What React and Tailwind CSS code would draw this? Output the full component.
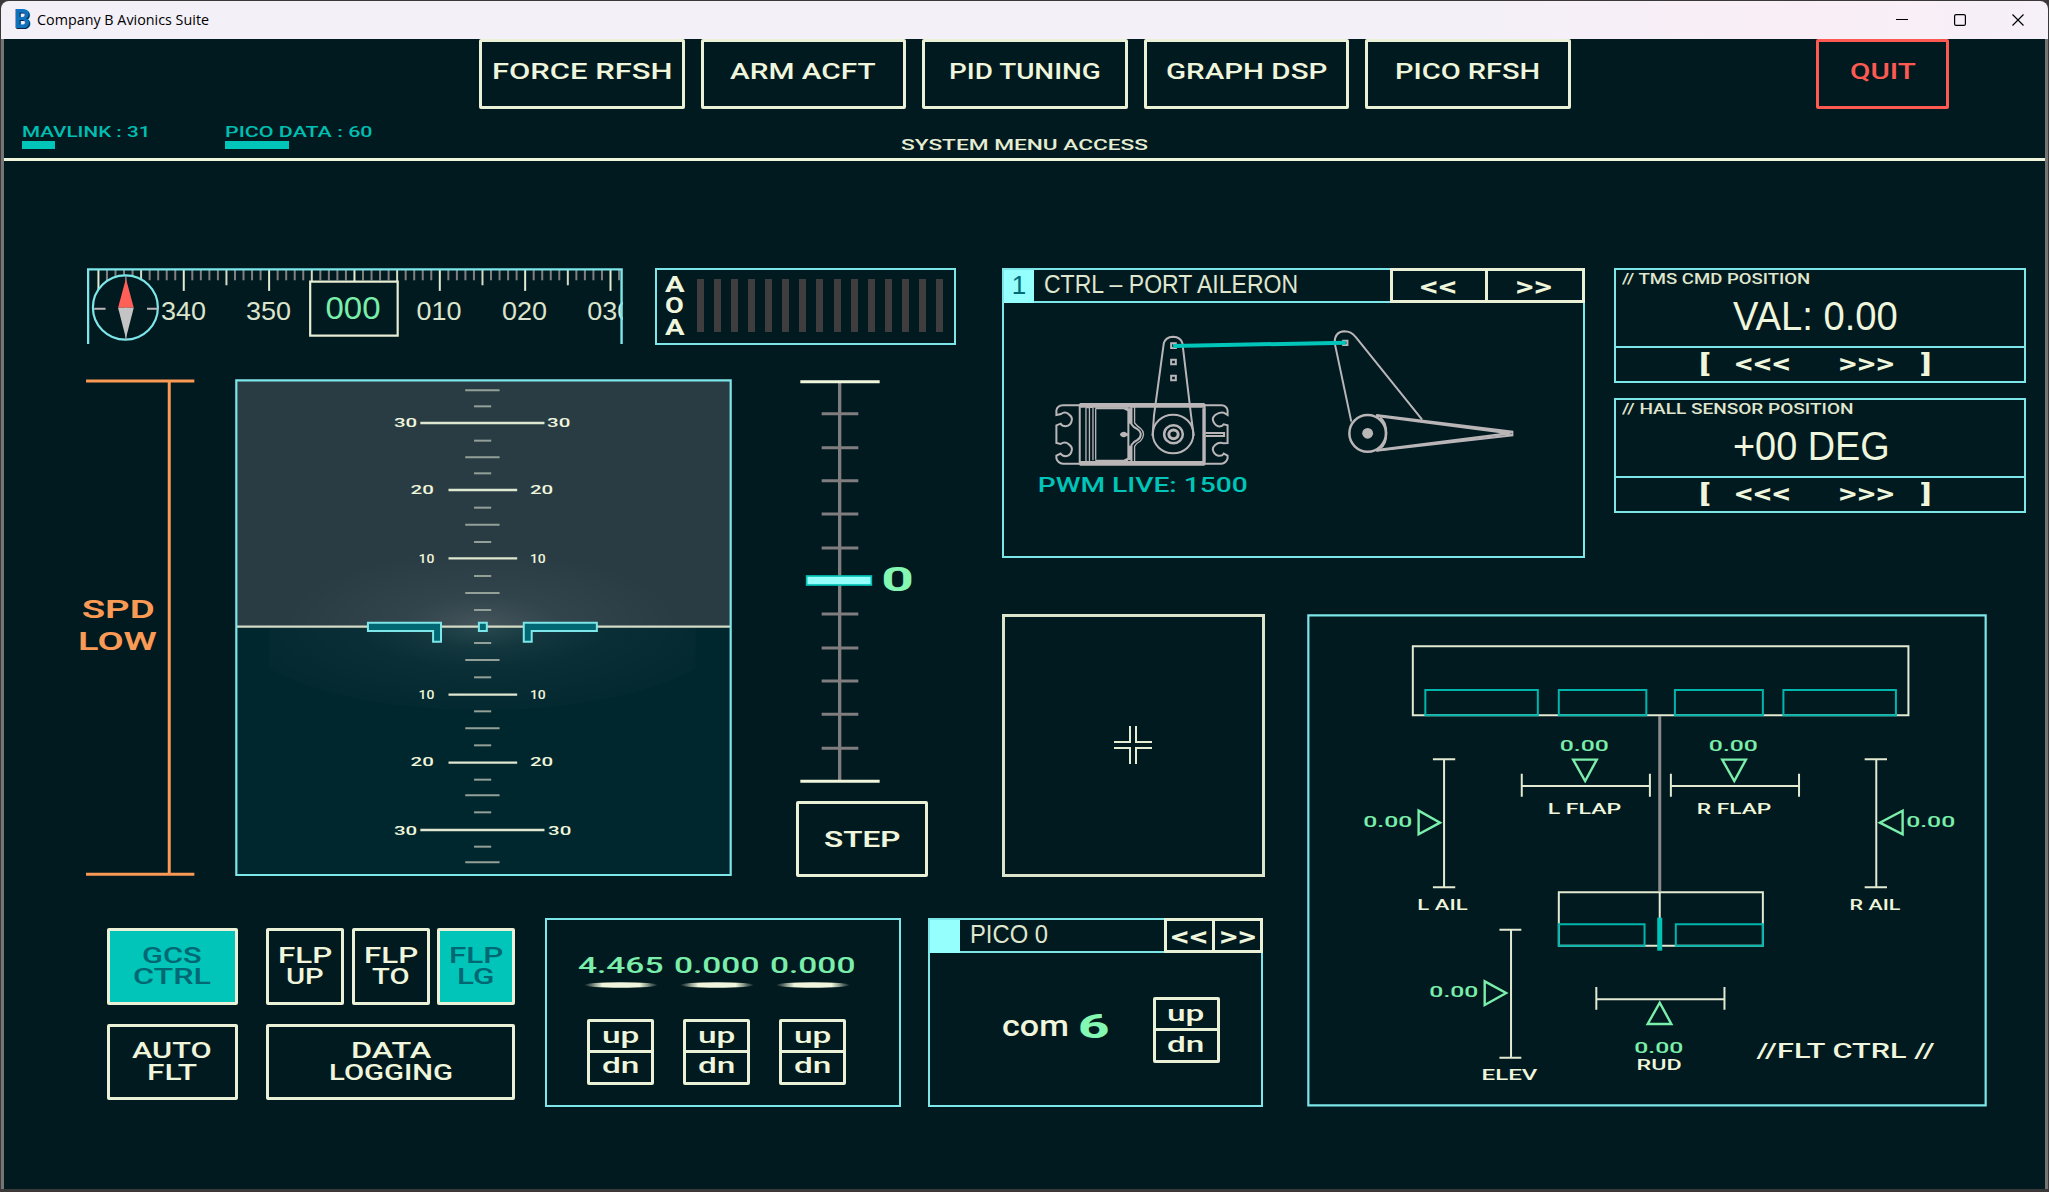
import React, { useLayoutEffect, useRef, useState } from "react";

// Extended display lettering: stretches its text to the width of the box.
function Fit({ className = "", children }) {
  const box = useRef(null);
  const text = useRef(null);
  const [scale, setScale] = useState(1);
  useLayoutEffect(() => {
    setScale(box.current.clientWidth / text.current.offsetWidth);
  }, [children]);
  return (
    <div ref={box} className={`shrink-0 overflow-visible text-left whitespace-nowrap leading-none ${className}`}>
      <span ref={text} className="inline-block origin-left leading-none" style={{ transform: `scaleX(${scale})` }}>
        {children}
      </span>
    </div>
  );
}

const cream = "#f0f6dc";
const dimCream = "#d3dbc6";
const cyan = "#7de6e8";
const teal = "#00c5b8";
const green = "#7aeeaa";
const grey = "#bab6b8";

function Btn({ className = "", children }) {
  return (
    <button className={`flex shrink-0 flex-col items-center justify-center rounded-[2px] border-[3px] border-[#eaf1d7] ${className}`}>
      {children}
    </button>
  );
}

function SvgText({ x, y, w, size = 44, fill = cream, weight = 500, family = "Roboto, sans-serif", children }) {
  return (
    <text x={x} y={y} textLength={w} lengthAdjust="spacingAndGlyphs" fontSize={size} fontWeight={weight} fontFamily={family} fill={fill}>
      {children}
    </text>
  );
}

function Line({ x1, y1, x2, y2, c = cream, s = 2 }) {
  return <line x1={x1} y1={y1} x2={x2} y2={y2} stroke={c} strokeWidth={s} vectorEffect="non-scaling-stroke" />;
}

function TitleBar() {
  return (
    <div className="mx-px flex h-[38px] shrink-0 items-center rounded-t-lg bg-linear-to-r from-[#f3f0f8] from-70% via-[#faeef6] via-88% to-[#f6f0f8] pl-[13px] text-black">
      <span className="-mt-px w-[16px] font-[Roboto] text-[25px] leading-none font-black text-[#0f72be] [text-shadow:1px_1px_0_#0a2440]">B</span>
      <Fit className="-mt-[2px] ml-[7px] w-[172px] font-['Open_Sans'] text-[15px]">Company B Avionics Suite</Fit>
      <div className="mr-[24px] ml-auto flex items-center gap-[46px]">
        <svg className="h-3 w-3" viewBox="0 0 12 12"><path d="M0 5.5H12" stroke="#000" /></svg>
        <svg className="h-3 w-3" viewBox="0 0 12 12"><rect x=".6" y=".6" width="10.8" height="10.8" rx="1.5" fill="none" stroke="#000" strokeWidth="1.2" /></svg>
        <svg className="h-3 w-3" viewBox="0 0 12 12"><path d="M.5 .5L11.5 11.5M11.5 .5L.5 11.5" stroke="#000" strokeWidth="1.2" /></svg>
      </div>
    </div>
  );
}

function Header() {
  return (
    <header className="flex h-[122px] shrink-0 flex-col border-b-[3px] border-[#eff6dc] font-[Roboto] font-medium">
      <div className="flex h-[70px] gap-[16px] pr-[96px] pl-[475px] text-[22px]">
        <Btn className="h-[70px] w-[205.5px] pb-[4px]"><Fit className="w-[180px]">FORCE RFSH</Fit></Btn>
        <Btn className="h-[70px] w-[205.5px] pb-[4px]"><Fit className="w-[146px]">ARM ACFT</Fit></Btn>
        <Btn className="h-[70px] w-[205.5px] pb-[4px]"><Fit className="w-[152px]">PID TUNING</Fit></Btn>
        <Btn className="h-[70px] w-[205.5px] pb-[4px]"><Fit className="w-[161px]">GRAPH DSP</Fit></Btn>
        <Btn className="h-[70px] w-[205.5px] pb-[4px]"><Fit className="w-[145px]">PICO RFSH</Fit></Btn>
        <Btn className="ml-auto h-[70px] w-[133px] border-[#ff5a52]! pb-[4px] text-[#ff5a52]"><Fit className="w-[66px]">QUIT</Fit></Btn>
      </div>
      <div className="flex pl-[18px] text-[15.5px] text-[#00bfb2]">
        <div className="w-[202.5px] pt-[16px]">
          <Fit className="w-[128px]">MAVLINK : 31</Fit>
          <div className="h-[8px] w-[33px] bg-[#00c5b8]" />
        </div>
        <div className="w-[676.5px] pt-[16px]">
          <Fit className="w-[148px]">PICO DATA : 60</Fit>
          <div className="h-[8px] w-[64px] bg-[#00c5b8]" />
        </div>
        <div className="pt-[29px] text-[#e6edd3]"><Fit className="w-[247px]">SYSTEM MENU ACCESS</Fit></div>
      </div>
    </header>
  );
}

function Compass() {
  const ticks = [];
  for (let i = 0; i <= 61; i++) {
    const x = 80 + i * 23.9;
    if (x > 1545) break;
    const major = i % 10 === 0;
    const mid = i % 5 === 0;
    ticks.push(<Line key={i} x1={x} x2={x} y1={56} y2={major ? 122 : mid ? 105 : 90} c={major ? "#e3ead2" : mid ? dimCream : "#817f80"} />);
  }
  const nums = [[258, "340"], [496, "350"], [974, "010"], [1213, "020"], [1452, "030"]];
  return (
    <svg className="h-[76px] w-[536px] shrink-0" viewBox="48 53 1501 229" preserveAspectRatio="none">
      {ticks}
      {nums.map(([x, t]) => (
        <SvgText key={t} x={x - 3} y={210} w={126} size={80} weight={400} fill="#dde4cd" family="'Liberation Sans', sans-serif">{t}</SvgText>
      ))}
      <ellipse cx="155.500" cy="172" rx="91" ry="97" fill="#001a20" stroke={cyan} strokeWidth="2.200" vectorEffect="non-scaling-stroke" />
      <path d="M68 176H100M216 176H246" stroke={grey} strokeWidth="2" vectorEffect="non-scaling-stroke" />
      <path d="M157 78V270" stroke={grey} strokeWidth="1" vectorEffect="non-scaling-stroke" />
      <path d="M157 85L179 173H135Z" fill="#ff5f57" />
      <path d="M157 265L179 173H135Z" fill="#c4c4c4" />
      <rect x="673" y="94" width="245" height="163" fill="#001a20" stroke="#e6edd3" strokeWidth="2.200" vectorEffect="non-scaling-stroke" />
      <SvgText x={716} y={208} w={154} size={94} weight={400} fill={green} family="'Liberation Sans', sans-serif">000</SvgText>
      <path d="M51 282V57H1545V282" fill="none" stroke={cyan} strokeWidth="2.400" vectorEffect="non-scaling-stroke" />
    </svg>
  );
}

function Aoa() {
  return (
    <div className="ml-[32px] flex h-[77px] w-[301px] shrink-0 border-[2px] border-[#7de6e8] pl-[8px] font-[Roboto]">
      <div className="flex flex-col pt-[4px] text-[21.5px] font-bold text-[#f0f6dc]">
        {["A", "O", "A"].map((c, i) => (
          <div key={i} className="flex h-[21.3px] items-center"><Fit className="w-[19px]">{c}</Fit></div>
        ))}
      </div>
      <div className="ml-[13px] flex gap-[10.07px] pt-[9px]">
        {Array.from({ length: 15 }, (_, i) => <div key={i} className="h-[53px] w-[7px] bg-[#3f3d3d]" />)}
      </div>
    </div>
  );
}

function SpeedGauge() {
  return (
    <svg className="h-[498px] w-[116px] shrink-0" viewBox="43 41 263.500 1494" preserveAspectRatio="none">
      <Line x1={59} x2={305} y1={47} y2={47} c="#fb9a55" s={3} />
      <Line x1={59} x2={305} y1={1527} y2={1527} c="#fb9a55" s={3} />
      <Line x1={248} x2={248} y1={47} y2={1527} c="#fb9a55" s={3} />
      <SvgText x={49} y={758} w={166} size={76} weight={600} fill="#fb9a55">SPD</SvgText>
      <SvgText x={41} y={854} w={179} size={76} weight={600} fill="#fb9a55">LOW</SvgText>
    </svg>
  );
}

function Attitude() {
  const short = [123, 226, 324, 427, 530, 632, 734, 833, 936, 1038, 1140, 1243, 1341, 1444];
  const mid = [75, 276, 478, 683, 884, 1089, 1290, 1491];
  const marks = [
    [760, 1108, 184, "30", 53], [798, 1069, 385, "20", 53], [816, 1069, 593, "10", 36],
    [816, 1069, 1001, "10", 36], [798, 1069, 1203, "20", 53], [760, 1110, 1408, "30", 53],
  ];
  return (
    <svg className="ml-[39.5px] h-[498px] w-[497px] shrink-0" viewBox="399 41 1129 1494" preserveAspectRatio="none">
      <defs>
        <radialGradient id="glow">
          <stop offset="0" stopColor="#fff" stopOpacity=".16" />
          <stop offset=".25" stopColor="#fff" stopOpacity=".08" />
          <stop offset=".5" stopColor="#fff" stopOpacity=".04" />
          <stop offset="1" stopColor="#fff" stopOpacity=".012" />
        </radialGradient>
        <radialGradient id="skyGlow">
          <stop offset="0" stopColor="#fff" stopOpacity=".13" />
          <stop offset=".4" stopColor="#fff" stopOpacity=".04" />
          <stop offset="1" stopColor="#fff" stopOpacity="0" />
        </radialGradient>
        <clipPath id="glowClip"><rect x="477" y="784" width="968" height="300" /></clipPath>
        <clipPath id="skyClip"><rect x="402" y="500" width="1123" height="284" /></clipPath>
      </defs>
      <rect x="402" y="45" width="1123" height="739" fill="#293c44" />
      <rect x="402" y="784" width="1123" height="745" fill="#00262e" />
      <ellipse cx="961" cy="784" rx="560" ry="250" fill="url(#glow)" clipPath="url(#glowClip)" />
      <ellipse cx="961" cy="784" rx="450" ry="230" fill="url(#skyGlow)" clipPath="url(#skyClip)" />
      {short.map((y) => <Line key={y} x1={942} x2={981} y1={y} y2={y} c="#93a097" />)}
      {mid.map((y) => <Line key={y} x1={922} x2={1000} y1={y} y2={y} c="#93a097" />)}
      {[374, 579, 988, 1192].map((y) => <Line key={y} x1={884} x2={1040} y1={y} y2={y} c="#e0e7d0" s={2.4} />)}
      {[173, 1394].map((y) => <Line key={y} x1={820} x2={1102} y1={y} y2={y} c="#e0e7d0" s={2.4} />)}
      {marks.map(([a, b, y, t, w]) => (
        <g key={y}>
          <SvgText x={a} y={y} w={w} size={37}>{t}</SvgText>
          <SvgText x={b} y={y} w={w} size={37}>{t}</SvgText>
        </g>
      ))}
      <Line x1={402} x2={1525} y1={784} y2={784} c={dimCream} s={2.2} />
      <g fill="#006773" stroke={cyan} strokeWidth="2">
        <path vectorEffect="non-scaling-stroke" d="M701 772H867V829H849V797H701Z" />
        <path vectorEffect="non-scaling-stroke" d="M1055 772H1221V797H1073V829H1055Z" />
        <path vectorEffect="non-scaling-stroke" d="M953 772H971V797H953Z" />
      </g>
      <rect x="402" y="45" width="1123" height="1484" fill="none" stroke={cyan} strokeWidth="2.200" vectorEffect="non-scaling-stroke" />
    </svg>
  );
}

function Trim() {
  return (
    <svg className="h-[404px] w-[132px] shrink-0" viewBox="48 42 396 1212">
      <path d="M179 50V1249" stroke="#807d7e" strokeWidth="10" />
      <path d="M125 146H235M125 248H235M125 347H235M125 447H235M125 549H235M125 747H235M125 849H235M125 948H235M125 1048H235M125 1150H235" stroke="#807d7e" strokeWidth="9" />
      <path d="M61 50H299M61 1249H299" stroke={cream} strokeWidth="9" />
      <rect x="80" y="633" width="194" height="27" fill="#94fffb" stroke={teal} strokeWidth="5" />
      <SvgText x={304} y={678} w={98} size={97} weight={700} fill="#84f7b2">0</SvgText>
    </svg>
  );
}

function Servo() {
  return (
    <svg className="h-[252px] w-[577px] shrink-0" viewBox="38.500 144 1483 756" preserveAspectRatio="none">
      <g fill="none" stroke={grey} strokeWidth="2">
        <g>
          {[
            "M228 451H185Q170 452 168 466V480L180 477Q190 468 200 478Q208 484 208 493Q206 512 192 514Q182 514 179 506L168 511V564L179 567Q190 558 200 568Q208 574 208 583Q206 602 192 604Q182 602 179 596L168 602V610Q172 625 185 626H228",
            "M550 451H592Q606 452 608 466V480L598 473Q588 470 576 480Q570 486 570 493Q572 508 584 514Q594 516 598 508L608 511V564L598 565Q586 560 576 570Q570 576 570 583Q572 598 584 602Q594 604 598 596L608 602V610Q604 625 592 626H550",
            "M228 447V629M549 447V629M228 447H549M228 629H549",
            "M268 460H352M268 617H352M342 460L352 466M342 617L352 611",
            "M353 460V615M361 455V508Q366 518 376 522Q384 528 385 538Q384 550 376 555Q366 560 361 570V622",
            "M551 534H599V543H551",
            "M415 543L419 480L444 265Q448 246 468 245Q488 246 492 265L514 480L521 543",
            "M883 262Q884 230 908 229Q926 229 937 246L1108 494",
            "M883 262L926 500",
            "M990 480L1340 530V541L990 587M1340 530L1308 535L1340 541",
            "M1000 488Q1016 500 1016 535Q1016 570 1000 580",
          ].map((d) => <path key={d} d={d} vectorEffect="non-scaling-stroke" />)}
          <path d="M244 458V618M253 456V620M262 458V616M269 462V614M244 458Q250 456 262 456M244 618Q250 622 262 622" strokeWidth="1.300" vectorEffect="non-scaling-stroke" />
          <path d="M369 455V504Q376 514 384 520Q392 528 392 538Q391 550 384 558Q374 564 369 574V622" strokeWidth="1.300" vectorEffect="non-scaling-stroke" />
        </g>
        <path d="M228 452H549M228 624H549" strokeWidth="4" vectorEffect="non-scaling-stroke" />
        <path d="M547 460V618M357 460V506M357 572V616" strokeWidth="3" vectorEffect="non-scaling-stroke" />
        <path d="M990 482L1335 535L990 586" strokeWidth="2.600" vectorEffect="non-scaling-stroke" />
        <ellipse cx="468" cy="537" rx="52" ry="58" vectorEffect="non-scaling-stroke" />
        <ellipse cx="469" cy="538" rx="24" ry="27" strokeWidth="2.500" vectorEffect="non-scaling-stroke" />
        <ellipse cx="469" cy="538" rx="12" ry="13" strokeWidth="3" vectorEffect="non-scaling-stroke" />
        <ellipse cx="968" cy="535" rx="47" ry="55" strokeWidth="2.500" vectorEffect="non-scaling-stroke" />
        {[272, 321, 369].map((y) => <rect key={y} x="463" y={y - 7} width="12" height="14" vectorEffect="non-scaling-stroke" />)}
        <rect x="905" y="257" width="11" height="13" vectorEffect="non-scaling-stroke" />
      </g>
      <ellipse cx="968" cy="535" rx="14" ry="16" fill={grey} />
      <path d="M331 538Q334 529 343 530L353 536V541L343 547Q334 548 331 538Z" fill={grey} />
      <path d="M468 273L912 263" stroke={teal} strokeWidth="4" vectorEffect="non-scaling-stroke" />
      <SvgText x={120} y={710} w={540} size={62} fill={teal}>PWM LIVE: 1500</SvgText>
    </svg>
  );
}

function PanelHead({ chip, title, nav }) {
  return (
    <div className="flex h-[33px] shrink-0 border-b-[2px] border-[#7de6e8]">
      <div className="-mb-[2px] flex w-[30px] shrink-0 items-center justify-center bg-[#94fffc] pb-[3px] font-['Liberation_Sans'] text-[26px] leading-none text-[#006a78]">{chip}</div>
      {title}
      {nav}
    </div>
  );
}

function ControlPanel() {
  return (
    <div className="col-start-2 row-start-1 mt-[107px] flex h-[290px] w-[583px] flex-col border-[2px] border-[#7de6e8]">
      <PanelHead
        chip="1"
        title={<Fit className="mt-[2px] ml-[10px] w-[254px] font-['Liberation_Sans'] text-[25px] text-[#e0e7cf]">CTRL – PORT AILERON</Fit>}
        nav={
          <div className="-mt-[2px] -mr-[2px] ml-auto flex h-[35px] w-[195px] border-[3px] border-[#eaf1d7] font-[Roboto] text-[27px] font-medium text-[#f0f6dc]">
            <div className="flex flex-1 items-center justify-center border-r-[3px] border-[#eaf1d7] pt-[3px]"><Fit className="w-[37px]">&lt;&lt;</Fit></div>
            <div className="flex flex-1 items-center justify-center pt-[3px] pr-[3px]"><Fit className="w-[37px]">&gt;&gt;</Fit></div>
          </div>
        }
      />
      <div className="pl-[2px]"><Servo /></div>
    </div>
  );
}

function ValuePanel({ label, value }) {
  return (
    <div className="flex h-[115px] w-[412px] flex-col border-[2px] border-[#7de6e8] text-[#f0f6dc]">
      <div className="flex h-[78px] flex-col border-b-[2px] border-[#7de6e8]">
        <div className="pt-[2px] pl-[6px] font-[Roboto] text-[14px] font-medium text-[#e0e7cf]">{label}</div>
        <div className="pt-[10px] pl-[117px] font-['Liberation_Sans'] text-[40px]">{value}</div>
      </div>
      <div className="flex h-[32px] items-center pl-[83px] font-[Roboto] text-[27px] font-medium">
        <Fit className="w-[10px] text-[23px] font-bold">[</Fit>
        <Fit className="ml-[26px] w-[56px]">&lt;&lt;&lt;</Fit>
        <Fit className="ml-[47px] w-[56px]">&gt;&gt;&gt;</Fit>
        <Fit className="ml-[27px] w-[10px] text-[23px] font-bold">]</Fit>
      </div>
    </div>
  );
}

function XYPad() {
  return (
    <div className="col-start-2 row-start-2 flex h-[263px] w-[263px] items-center justify-center border-[3px] border-[#dde4cc] pr-[2px] pb-[2px]">
      <svg className="h-[38px] w-[38px]" viewBox="-19 -19 38 38" fill="none" stroke="#e6edd3" strokeWidth="2">
        <path d="M-3 -19V-3H-19M3 -19V-3H19M-3 19V3H-19M3 19V3H19" />
      </svg>
    </div>
  );
}

function FlightControls() {
  return (
    <div className="col-start-3 row-start-2 row-span-2 ml-[1px] flex h-[494px] w-[680px]">
      <svg className="h-[494px] w-[680px]" viewBox="15 28 1523 1482" preserveAspectRatio="none">
        <g fill="none" strokeWidth="2">
          <rect x="18" y="32" width="1517" height="1470" stroke={cyan} strokeWidth="2.200" vectorEffect="non-scaling-stroke" />
          <rect x="252" y="125" width="1110" height="207" stroke="#e3ead1" vectorEffect="non-scaling-stroke" />
          <path d="M280 332V256H532V332ZM579 332V256H775V332ZM839 332V256H1036V332ZM1082 332V256H1334V332Z" stroke="#00b5ab" vectorEffect="non-scaling-stroke" />
          <path d="M805 334V860" stroke="#8d8a8b" strokeWidth="3" vectorEffect="non-scaling-stroke" />
          <path d="M579 1023V863H1036V1023ZM805 863V940" stroke="#e3ead1" vectorEffect="non-scaling-stroke" />
          <path d="M579 1023V959H771V1023ZM841 1023V959H1036V1023Z" stroke="#00b5ab" vectorEffect="non-scaling-stroke" />
          <path d="M805 939V1038" stroke={teal} strokeWidth="5" vectorEffect="non-scaling-stroke" />
          <path d="M496 507V576M783 507V576M496 544H783M830 507V576M1117 507V576M830 544H1117M663 1147V1215M950 1147V1215M663 1184H950M297 464H347M322 464V848M297 848H347M1264 464H1314M1290 464V848M1264 848H1314M446 975H495M472 975V1359M446 1359H495" stroke="#e3ead1" vectorEffect="non-scaling-stroke" />
          <path d="M611 465H664L638 529ZM945 465H998L972 529ZM265 618V689L313 654ZM1349 618V689L1298 654ZM413 1130V1201L461 1165ZM778 1258H831L805 1194Z" stroke={green} strokeWidth="2.400" vectorEffect="non-scaling-stroke" />
        </g>
        <SvgText x={581} y={439} w={110} size={44} fill={green}>0.00</SvgText>
        <SvgText x={915} y={439} w={110} size={44} fill={green}>0.00</SvgText>
        <SvgText x={141} y={666} w={110} size={44} fill={green}>0.00</SvgText>
        <SvgText x={1357} y={666} w={110} size={44} fill={green}>0.00</SvgText>
        <SvgText x={289} y={1178} w={110} size={44} fill={green}>0.00</SvgText>
        <SvgText x={748} y={1344} w={110} size={44} fill={green}>0.00</SvgText>
        <SvgText x={554} y={627} w={165} size={44}>L FLAP</SvgText>
        <SvgText x={888} y={627} w={167} size={44}>R FLAP</SvgText>
        <SvgText x={262} y={915} w={113} size={44}>L AIL</SvgText>
        <SvgText x={1230} y={915} w={114} size={44}>R AIL</SvgText>
        <SvgText x={406} y={1426} w={125} size={44}>ELEV</SvgText>
        <SvgText x={753} y={1395} w={101} size={44}>RUD</SvgText>
        <SvgText x={1022} y={1359} w={399} size={60}>//FLT CTRL //</SvgText>
      </svg>
    </div>
  );
}

function UpDown() {
  return (
    <div className="flex h-[66px] w-[67px] shrink-0 flex-col rounded-[2px] border-[3px] border-[#eaf1d7] font-[Roboto] text-[22px] font-medium text-[#f0f6dc]">
      <div className="flex h-[31px] items-center justify-center border-b-[3px] border-[#eaf1d7]"><Fit className="w-[38px]">up</Fit></div>
      <div className="flex h-[29px] items-center justify-center pb-[2px]"><Fit className="w-[38px]">dn</Fit></div>
    </div>
  );
}

function Reading({ value }) {
  return (
    <div className="flex flex-col items-center">
      <Fit className="w-[86px] font-[Roboto] text-[21.8px] font-medium text-[#7aeeaa]">{value}</Fit>
      <svg className="mt-[5px] mb-[31px] h-[6px] w-[74px]" viewBox="0 0 74 6">
        <defs>
          <linearGradient id="fade">
            <stop offset="0" stopColor={cream} stopOpacity="0" />
            <stop offset=".25" stopColor={cream} />
            <stop offset=".75" stopColor={cream} />
            <stop offset="1" stopColor={cream} stopOpacity="0" />
          </linearGradient>
        </defs>
        <ellipse cx="37" cy="3" rx="37" ry="2.700" fill="url(#fade)" />
      </svg>
      <UpDown />
    </div>
  );
}

function BottomRow() {
  return (
    <div className="col-span-2 col-start-1 row-start-3 flex pl-[102.5px] font-[Roboto] text-[21.5px] font-medium text-[#f0f6dc]">
      <div className="flex w-[409px] shrink-0 flex-col gap-[19px] pt-[11px]">
        <div className="flex">
          <Btn className="h-[76.5px] w-[131.5px] bg-[#00c5b8] text-[#006773]">
            <Fit className="w-[60px]">GCS</Fit><Fit className="w-[78px]">CTRL</Fit>
          </Btn>
          <div className="ml-[28px] flex w-[249px] justify-between">
            <Btn className="h-[76.5px] w-[78px]"><Fit className="w-[54px]">FLP</Fit><Fit className="w-[38px]">UP</Fit></Btn>
            <Btn className="h-[76.5px] w-[78px]"><Fit className="w-[54px]">FLP</Fit><Fit className="w-[38px]">TO</Fit></Btn>
            <Btn className="h-[76.5px] w-[78px] bg-[#00c5b8] text-[#006773]"><Fit className="w-[54px]">FLP</Fit><Fit className="w-[38px]">LG</Fit></Btn>
          </div>
        </div>
        <div className="flex">
          <Btn className="h-[76.5px] w-[131.5px]"><Fit className="w-[80px]">AUTO</Fit><Fit className="w-[50px]">FLT</Fit></Btn>
          <Btn className="ml-[28px] h-[76.5px] w-[249px]"><Fit className="w-[80px]">DATA</Fit><Fit className="w-[124px]">LOGGING</Fit></Btn>
        </div>
      </div>
      <div className="mt-px ml-[29px] flex h-[189px] w-[356px] shrink-0 gap-[10px] border-[2px] border-[#7de6e8] pt-[35px] pl-[31px]">
        <Reading value="4.465" />
        <Reading value="0.000" />
        <Reading value="0.000" />
      </div>
      <div className="mt-px ml-[27px] flex h-[189px] w-[335px] shrink-0 flex-col border-[2px] border-[#7de6e8]">
        <PanelHead
          chip=""
          title={<Fit className="mt-[2px] ml-[10px] w-[78px] font-['Liberation_Sans'] text-[25px] font-normal text-[#e0e7cf]">PICO 0</Fit>}
          nav={
            <div className="-mt-[2px] -mr-[2px] ml-auto flex h-[35px] w-[99px] border-[3px] border-[#eaf1d7] text-[27px]">
              <div className="flex w-[48px] items-center justify-center border-r-[3px] border-[#eaf1d7] pt-[3px]"><Fit className="w-[37px]">&lt;&lt;</Fit></div>
              <div className="flex flex-1 items-center justify-center pt-[3px]"><Fit className="w-[37px]">&gt;&gt;</Fit></div>
            </div>
          }
        />
        <div className="flex pl-[72px]">
          <Fit className="mt-[59px] w-[67px] text-[29px]">com</Fit>
          <Fit className="mt-[56px] ml-[9px] w-[32px] text-[34px] font-extrabold text-[#84f7b2]">6</Fit>
          <div className="ml-[43px] pt-[44px]"><UpDown /></div>
        </div>
      </div>
    </div>
  );
}

export default function App() {
  return (
    <div className="flex h-[1192px] w-[2049px] flex-col overflow-hidden bg-[#3b3839] pt-px pb-[3px]">
      <TitleBar />
      <div className="mx-px flex min-h-0 flex-1 flex-col border-x-[3px] border-[#757575] bg-[#001a20] text-[#f0f6dc]">
        <Header />
        <main className="grid min-h-0 flex-1 grid-cols-[998px_304px_308px_430px] grid-rows-[453px_303px_272px]">
          <div className="col-start-1 row-span-2 row-start-1 flex flex-col pt-[107px]">
            <div className="flex h-[79px] items-start pl-[83px]">
              <Compass />
              <Aoa />
            </div>
            <div className="mt-[32px] flex pl-[75px]">
              <SpeedGauge />
              <Attitude />
              <div className="ml-[64.5px] flex w-[132px] flex-col">
                <Trim />
                <Btn className="mt-[18px] h-[76px] w-[132px]">
                  <Fit className="mt-px w-[76px] font-[Roboto] text-[21.5px] font-semibold">STEP</Fit>
                </Btn>
              </div>
            </div>
          </div>
          <ControlPanel />
          <div className="col-start-4 row-start-1 mt-[107px] flex flex-col gap-[15px]">
            <ValuePanel
              label={<Fit className="w-[188px]">// TMS CMD POSITION</Fit>}
              value={<Fit className="w-[165px]">VAL: 0.00</Fit>}
            />
            <ValuePanel
              label={<Fit className="w-[231px]">// HALL SENSOR POSITION</Fit>}
              value={<Fit className="w-[157px]">+00 DEG</Fit>}
            />
          </div>
          <XYPad />
          <FlightControls />
          <BottomRow />
        </main>
      </div>
    </div>
  );
}
